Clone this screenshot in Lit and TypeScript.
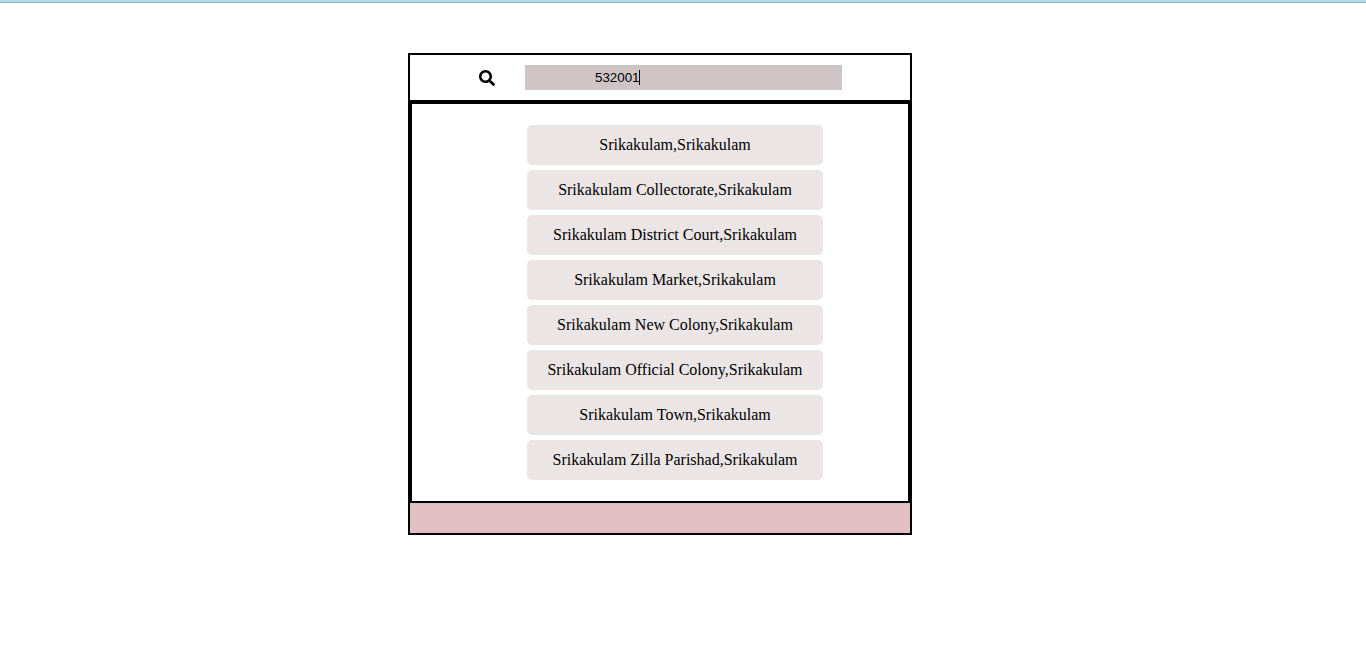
import { LitElement, html, css } from "lit";
import { customElement, state } from "lit/decorators.js";

@customElement("app-root")
export class AppRoot extends LitElement {
  static styles = css`
    :host {
      display: block;
      font-family: "Liberation Serif", "Times New Roman", serif;
      font-size: 16px;
      color: #000;
    }
    .topbar {
      height: 2px;
      background: #b5e0e3;
      border-bottom: 1px solid #8bb0b9;
    }
    .card {
      box-sizing: border-box;
      max-width: 504px;
      margin: 50px auto 50px 408px;
      border: 2px solid #000;
    }
    .search {
      display: flex;
      align-items: center;
      gap: 30px;
      padding: 10px 68px 10px 69px;
      border-bottom: 2px solid #000;
    }
    .icon {
      display: block;
      flex: none;
      width: 16px;
      height: 16px;
      padding-top: 1px;
    }
    .field {
      position: relative;
      flex: 0 1 317px;
      height: 25px;
    }
    .input {
      box-sizing: border-box;
      display: block;
      width: 100%;
      height: 25px;
      margin: 0;
      padding: 0 0 0 70px;
      border: 0;
      border-radius: 0;
      outline: none;
      background: #cfc5c6;
      color: #000;
      caret-color: transparent;
      font-family: "Liberation Sans", Arial, sans-serif;
    }
    .caret {
      position: absolute;
      top: 5px;
      left: 114px;
      width: 1px;
      height: 15px;
      background: #000;
      pointer-events: none;
    }
    .results {
      display: flex;
      flex-direction: column;
      gap: 5px;
      margin: 0;
      padding: 21px 85px 21px 115px;
      border: 2px solid #000;
      list-style: none;
    }
    .result {
      padding: 10px;
      border-radius: 5px;
      background: #ebe5e5;
      line-height: 20px;
      text-align: center;
    }
    .footer {
      height: 30px;
      background: #e0c0c5;
    }
  `;

  @state() private pincode = "532001";

  private offices = [
    "Srikakulam",
    "Srikakulam Collectorate",
    "Srikakulam District Court",
    "Srikakulam Market",
    "Srikakulam New Colony",
    "Srikakulam Official Colony",
    "Srikakulam Town",
    "Srikakulam Zilla Parishad",
  ];

  render() {
    return html`
      <div class="topbar"></div>
      <main class="card">
        <div class="search">
          <label for="pincode" aria-label="Pincode">
            <svg class="icon" viewBox="0 0 512 512" aria-hidden="true">
              <path
                d="M505 442.700L405.300 343c-4.500-4.500-10.600-7-17-7H372c27.600-35.300 44-79.700 44-128C416 93.100 322.900 0 208 0S0 93.100 0 208s93.100 208 208 208c48.300 0 92.700-16.400 128-44v16.300c0 6.400 2.500 12.500 7 17l99.700 99.700c9.400 9.400 24.600 9.400 33.900 0l28.300-28.300c9.400-9.400 9.400-24.600.1-34zM208 336c-70.700 0-128-57.200-128-128 0-70.700 57.200-128 128-128 70.700 0 128 57.200 128 128 0 70.700-57.200 128-128 128z"
              />
            </svg>
          </label>
          <div class="field">
            <input
              class="input"
              id="pincode"
              type="text"
              .value=${this.pincode}
              @input=${(e: Event) => (this.pincode = (e.target as HTMLInputElement).value)}
            />
            <span class="caret"></span>
          </div>
        </div>
        <ul class="results">
          ${this.offices.map((office) => html`<li class="result">${office},Srikakulam</li>`)}
        </ul>
        <div class="footer"></div>
      </main>
    `;
  }
}
